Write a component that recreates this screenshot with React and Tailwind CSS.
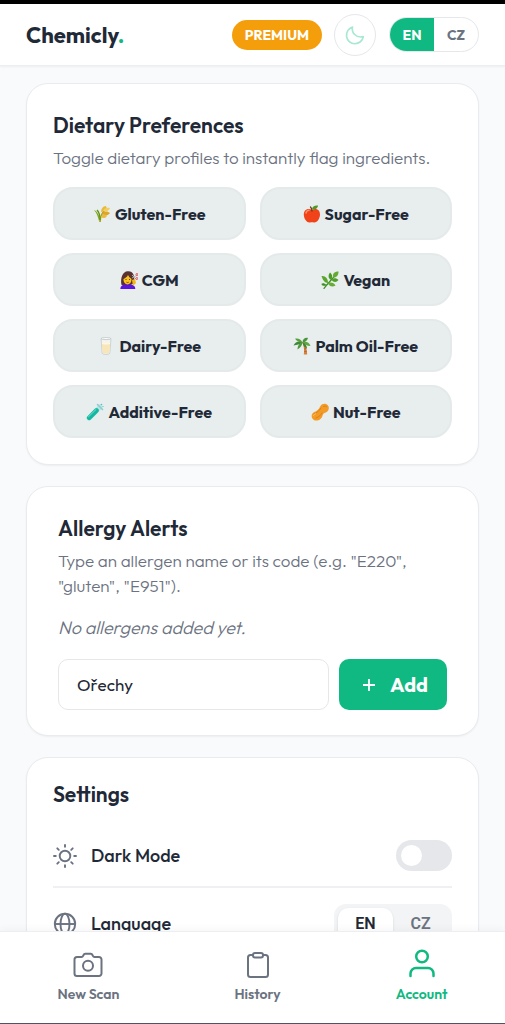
import React, { useState } from 'react';

const WheatIcon = () => (
    <svg viewBox="0 0 18 18" className="h-[18px] w-[18px]" fill="none" aria-hidden="true">
        <path d="M7 17C7 12 8 8 14 3" stroke="#a3a01e" strokeWidth="1.6" />
        <path d="M6 16C5 12 4 8 1 5c3 1 5 5 6 9" fill="#7fa61c" />
        <path d="M4 5c2 2 3 6 3 10" stroke="#5f9414" strokeWidth="1.3" />
        <path d="M8 7c0-3 2-6 5-6 1 3-2 6-5 6z" fill="#e9b93a" />
        <path d="M10 6c1-3 4-4 7-3-1 3-4 4-7 3z" fill="#f5ce5a" />
        <path d="M9 9c2-3 5-3 8-1-2 3-5 3-8 1z" fill="#dfa52a" />
        <path d="M8 12c1-3 4-3 6-1-1 2-4 3-6 1z" fill="#eabb40" />
    </svg>
);

const AppleIcon = () => (
    <svg viewBox="0 0 18 18" className="h-[18px] w-[18px]" fill="none" aria-hidden="true">
        <path d="M9 5C6 3 1 4 .8 9.500.8 14 4 18 7 17.500c1.500-.5 2.500-.5 4 0 3 .5 6-4 6-8C17 4 12 3 9 5z" fill="#f0431a" />
        <path d="M3 8c.4-1.800 1.500-2.700 3-2.800" stroke="#ff9166" strokeWidth="1.500" strokeLinecap="round" />
        <path d="M9 6c0-2-.5-3-1.500-4" stroke="#6b3b1c" strokeWidth="1.300" strokeLinecap="round" />
        <path d="M9 4.500c0-3 3-4.500 6-4C15 3 12 5 9 4.500z" fill="#4d9a24" />
    </svg>
);

const HaircutIcon = () => (
    <svg viewBox="0 0 18 18" className="h-[18px] w-[18px]" fill="none" aria-hidden="true">
        <path d="M1.500 14C0 7 3 0 8 .3c5-.3 7 4 6 12l-4 2z" fill="#5a3330" />
        <path d="M.3 18c0-3 2-4.500 5-4.500h5c3 0 5 1.500 5 4.500z" fill="#5b14e0" />
        <ellipse cx="7.500" cy="8.500" rx="4" ry="5" fill="#fcc21b" />
        <path d="M3 8c2-.5 4-2 5-4 1 2 2 3 4 4 0-4-1-6-4-6S3 4 3 8z" fill="#5a3330" />
        <path d="M5.500 8.500h1M9 8.500h1M6.500 11.200c.8.500 1.500.500 2.200 0" stroke="#58332c" strokeWidth=".9" />
        <path d="M12 7l5.500-3M12 4l4 4" stroke="#a8b4bb" strokeWidth="1" />
        <circle cx="17" cy="3.500" r="1" stroke="#e8515a" />
        <circle cx="16.800" cy="7.500" r="1" stroke="#e8515a" />
        <path d="M12 9l3-1 1 4-3 3z" fill="#f5b51b" />
    </svg>
);

const HerbIcon = () => (
    <svg viewBox="0 0 18 18" className="h-[18px] w-[18px]" fill="none" aria-hidden="true">
        <path d="M3 17.500C6 13 11 9 15 3" stroke="#3f8f22" strokeWidth="1.300" strokeLinecap="round" />
        <path d="M17.500.5C13 .5 11 3 12.500 6.500 16 6.500 17.500 4 17.500.5z" fill="#65ab32" />
        <path d="M10 9C7 7.500 7 4 9 1.500c2.500 2 3 5 1 7.500z" fill="#4b9b27" />
        <path d="M7 12C3.500 12 1.500 8.500.5 5 4.500 4.500 7 7.500 7 12z" fill="#5aa52c" />
        <path d="M10.500 9c2-2.500 5-2 7 0-2 2.500-5 2.500-7 0z" fill="#4f9f2a" />
        <path d="M7 12.500c2-2 6-1 7.500 2-3 2-6 1-7.500-2z" fill="#67ad35" />
        <path d="M5.500 14C3.500 12 1.500 12 .3 13c1 2 3 2.500 5.200 1z" fill="#3f8f22" />
    </svg>
);

const MilkIcon = () => (
    <svg viewBox="0 0 18 18" className="h-[18px] w-[18px]" fill="none" aria-hidden="true">
        <path d="M4 1.500h10l-1.200 14.800C12 17.800 6 17.800 5.200 16.300z" fill="#f3f4f1" stroke="#c3cbcb" strokeWidth=".8" />
        <path d="M4.800 6.500h8.400l-.9 9.300c-1 1-5.600 1-6.600 0z" fill="#f8e6b8" />
        <ellipse cx="9" cy="6.500" rx="4.200" ry="1.100" fill="#fff6de" />
        <ellipse cx="9" cy="1.600" rx="5" ry="1" fill="#fff" stroke="#b5bebe" strokeWidth=".7" />
    </svg>
);

const PalmIcon = () => (
    <svg viewBox="0 0 18 18" className="h-[18px] w-[18px]" fill="none" aria-hidden="true">
        <path d="M9 5c2 4 2.500 8 1.800 12.500h3.400C14 12 12.500 8 10.500 5z" fill="#d8803a" />
        <path d="M11 9.500l1.800-.5M11.300 12l2.200-.4M11.300 14.500l2.500-.3" stroke="#a85c28" strokeWidth=".8" />
        <path d="M9.500 5.500C6 3.500 2.500 4.500.5 8.500 4 8 7 7.500 9.500 5.500z" fill="#3f8a3a" />
        <path d="M9.500 5.500C8 2.500 5 .8 2 1.800 4 4.500 6.500 5.500 9.500 5.500z" fill="#5a9f3e" />
        <path d="M9.500 5.500C9.500 2.500 12 .3 15 1 14 4 12 5.300 9.500 5.500z" fill="#4a943b" />
        <path d="M9.500 5.500c3-1.500 6.500-.5 8 3.500-3.500-.3-6-1-8-3.500z" fill="#5fa540" />
        <path d="M9.500 5.500C6 6 4.500 9 4.500 12.500 7.500 10.500 9 8.500 9.500 5.500z" fill="#4f983b" />
        <path d="M9.500 5.500c3 1 4.500 3.500 4.500 6-2.500-1.200-4-3-4.500-6z" fill="#3d8638" />
    </svg>
);

const TubeIcon = () => (
    <svg viewBox="0 0 18 18" className="h-[18px] w-[18px]" fill="none" aria-hidden="true">
        <path d="M3 15L14 4" stroke="#b9e6e4" strokeWidth="5" strokeLinecap="round" />
        <path d="M3.200 14.800L10.500 7.500" stroke="#14b8a0" strokeWidth="4.600" strokeLinecap="round" />
        <path d="M2.500 13.800L10 6.500" stroke="#6fe0d0" strokeWidth="1" strokeLinecap="round" />
        <path d="M11.500 1.500l5 5" stroke="#8fcbd0" strokeWidth="1.600" strokeLinecap="round" />
        <circle cx="15.500" cy="1.500" r=".8" fill="#49c5ba" />
        <circle cx="17" cy="3.500" r=".6" fill="#49c5ba" />
    </svg>
);

const PeanutIcon = () => (
    <svg viewBox="0 0 18 18" className="h-[18px] w-[18px]" fill="none" aria-hidden="true">
        <path d="M9.300 3.200C11 .5 15 0 17 2.500c1.800 2.500.5 6-2.200 7-2 .7-2.800 1.200-3.300 3.200C10.700 16.500 6 18.800 2.800 17-.3 15 0 10.500 3.300 9c2.500-1 4.500-2.500 6-5.800z" fill="#f39a27" />
        <path d="M3 11c3-1 5-3 7-6M5 15c3-1 5-3 6-5M12.500 3.500c1.300-.7 2.500-.5 3.200.3" stroke="#d47b17" strokeWidth=".8" strokeLinecap="round" />
        <path d="M2.500 12.500c.5-1 1-1.500 2-1.800" stroke="#ffc56b" strokeWidth="1" strokeLinecap="round" />
    </svg>
);

const dietaryProfiles = [
    { id: 'gluten', label: 'Gluten-Free', Icon: WheatIcon },
    { id: 'sugar', label: 'Sugar-Free', Icon: AppleIcon },
    { id: 'cgm', label: 'CGM', Icon: HaircutIcon },
    { id: 'vegan', label: 'Vegan', Icon: HerbIcon },
    { id: 'dairy', label: 'Dairy-Free', Icon: MilkIcon },
    { id: 'palm', label: 'Palm Oil-Free', Icon: PalmIcon },
    { id: 'additive', label: 'Additive-Free', Icon: TubeIcon },
    { id: 'nut', label: 'Nut-Free', Icon: PeanutIcon },
];

const MoonIcon = () => (
    <svg viewBox="0 0 24 24" className="h-5 w-5" fill="none" stroke="#a7e8d0" strokeWidth="2" strokeLinejoin="round" aria-hidden="true">
        <path d="M22 14A10.200 10.200 0 1 1 9 2.500C7.500 9 13 16 22 14z" />
    </svg>
);

const SunIcon = () => (
    <svg viewBox="0 0 24 24" className="h-6 w-6 shrink-0" fill="none" stroke="currentColor" strokeWidth="1.900" strokeLinecap="round" aria-hidden="true">
        <circle cx="12" cy="12" r="5.300" />
        <path d="M12 1v1.800M12 21.200V23M1 12h1.800M21.200 12H23M4.300 4.300l1.500 1.500M18.200 18.200l1.500 1.500M4.300 19.700l1.500-1.500M18.200 5.800l1.500-1.500" />
    </svg>
);

const GlobeIcon = () => (
    <svg viewBox="0 0 24 24" className="h-6 w-6 shrink-0" fill="none" stroke="currentColor" strokeWidth="1.900" aria-hidden="true">
        <circle cx="12" cy="12" r="10.200" />
        <ellipse cx="12" cy="12" rx="4.500" ry="10.200" />
        <path d="M2 12h20" />
    </svg>
);

const CameraIcon = () => (
    <svg viewBox="0 0 30 30" className="h-[30px] w-[30px]" fill="none" stroke="currentColor" strokeWidth="2" strokeLinejoin="round" aria-hidden="true">
        <path d="M4 8h4.500c1 0 1.300-.5 1.800-1.500.5-1.200 1-1.700 2-1.700h5.400c1 0 1.500.5 2 1.700.5 1 .8 1.500 1.800 1.500H26a2.500 2.500 0 0 1 2.500 2.500V24.500A2.500 2.500 0 0 1 26 27H4a2.500 2.500 0 0 1-2.500-2.500V10.500A2.500 2.500 0 0 1 4 8z" />
        <circle cx="15" cy="16.800" r="5" />
    </svg>
);

const ClipboardIcon = () => (
    <svg viewBox="0 0 30 30" className="h-[30px] w-[30px]" fill="none" stroke="currentColor" strokeWidth="2" strokeLinejoin="round" aria-hidden="true">
        <path d="M10 6H7.500A2.500 2.500 0 0 0 5 8.500v17A2.500 2.500 0 0 0 7.500 28h15a2.500 2.500 0 0 0 2.500-2.500v-17A2.500 2.500 0 0 0 22.500 6H20" />
        <rect x="10" y="4" width="10" height="4.500" rx="2" />
    </svg>
);

const UserIcon = () => (
    <svg viewBox="0 0 30 30" className="h-[30px] w-[30px]" fill="none" stroke="currentColor" strokeWidth="2.500" strokeLinecap="round" aria-hidden="true">
        <circle cx="15" cy="7.500" r="5.800" />
        <path d="M3.500 27v-2.500a5.500 5.500 0 0 1 5.500-5.500h12a5.500 5.500 0 0 1 5.500 5.500V27" />
    </svg>
);

const Card = ({ className, children }) => (
    <section className={`shrink-0 rounded-[22px] border border-[#e9ebee] bg-white shadow-xs ${className}`}>
        {children}
    </section>
);

const navItems = [
    { id: 'scan', label: 'New Scan', Icon: CameraIcon },
    { id: 'history', label: 'History', Icon: ClipboardIcon },
    { id: 'account', label: 'Account', Icon: UserIcon },
];

const Header = ({ lang, setLang }) => (
    <header className="flex h-[66px] shrink-0 items-center justify-between border-t-4 border-b border-t-black border-b-[#eceef1] bg-white px-[26px] shadow-xs">
        <a href="#" className="text-[22px] leading-8 font-bold text-[#1f2937]">
            Chemicly<span className="text-[#10b981]">.</span>
        </a>
        <div className="flex items-center">
            <span className="rounded-full bg-[#f59e0b] px-[13px] text-sm leading-[30px] font-bold text-white">PREMIUM</span>
            <button type="button" aria-label="Toggle dark mode" className="ml-3 flex h-[42px] w-[42px] items-center justify-center rounded-full border border-[#e5e7eb]">
                <MoonIcon />
            </button>
            <div className="ml-[13px] flex h-[35px] w-[90px] overflow-hidden rounded-full border border-[#e5e7eb] text-sm font-bold">
                {['EN', 'CZ'].map(code => (
                    <button
                        key={code}
                        type="button"
                        onClick={() => setLang(code)}
                        className={`flex-1 ${lang === code ? 'bg-[#10b981] text-white' : 'text-[#6b7280]'}`}
                    >
                        {code}
                    </button>
                ))}
            </div>
        </div>
    </header>
);

export default function App() {
    const [lang, setLang] = useState('EN');
    const [allergen, setAllergen] = useState('Ořechy');
    const [darkMode, setDarkMode] = useState(false);
    const [activeTab, setActiveTab] = useState('account');

    return (
        <div className="flex h-screen flex-col bg-[#f9fafb] font-['Outfit','Lato',sans-serif] text-[#1f2937]">
            <Header lang={lang} setLang={setLang} />

            <main className="flex min-h-0 flex-1 flex-col gap-[21px] overflow-y-auto px-[26px] pt-[17px] [scrollbar-width:none]">
                <Card className="px-[26px] pt-[25px] pb-[26px]">
                    <h2 className="text-[21px] leading-8 font-semibold">Dietary Preferences</h2>
                    <p className="mt-1 text-[17px] leading-[25px] font-light text-[#6b7280]">Toggle dietary profiles to instantly flag ingredients.</p>
                    <div className="mt-[17px] grid grid-cols-2 gap-x-[14px] gap-y-[13px]">
                        {dietaryProfiles.map(({ id, label, Icon }) => (
                            <button
                                key={id}
                                type="button"
                                className="flex h-[53px] items-center justify-center gap-1 rounded-[20px] border-2 border-[#e4e9e9] bg-[#e8eeed] text-base font-bold"
                            >
                                <Icon />
                                {label}
                            </button>
                        ))}
                    </div>
                </Card>

                <Card className="px-[31px] py-[25px]">
                    <h2 className="text-[21px] leading-8 font-semibold">Allergy Alerts</h2>
                    <p className="mt-1 text-[17px] leading-[25px] font-light text-[#6b7280]">
                        Type an allergen name or its code (e.g. "E220", "gluten", "E951").
                    </p>
                    <p className="mt-[17px] text-lg leading-[26px] font-light text-[#6b7280] italic">No allergens added yet.</p>
                    <form className="mt-[18px] flex gap-[10px]" onSubmit={e => e.preventDefault()}>
                        <input
                            type="text"
                            aria-label="Allergen"
                            value={allergen}
                            onChange={e => setAllergen(e.target.value)}
                            className="h-[51px] min-w-0 flex-1 rounded-[10px] border border-[#e5e7eb] px-[18px] text-[17px] outline-none"
                        />
                        <button type="submit" className="flex h-[51px] w-[108px] items-center justify-center gap-[14px] rounded-[10px] bg-[#10b981] pl-1 text-xl font-bold text-white">
                            <svg viewBox="0 0 14 14" className="h-[14px] w-[14px]" stroke="currentColor" strokeWidth="1.800" aria-hidden="true">
                                <path d="M7 1v12M1 7h12" />
                            </svg>
                            Add
                        </button>
                    </form>
                </Card>

                <Card className="px-[26px] pt-5 pb-[26px]">
                    <h2 className="text-[21px] leading-8 font-semibold">Settings</h2>
                    <div className="mt-[15px] flex h-[63px] items-center justify-between border-b-2 border-[#eff0f3]">
                        <label htmlFor="dark-mode" className="flex items-center gap-[14px] text-lg font-medium">
                            <span className="text-[#6b7280]"><SunIcon /></span>
                            Dark Mode
                        </label>
                        <input
                            id="dark-mode"
                            type="checkbox"
                            role="switch"
                            checked={darkMode}
                            onChange={e => setDarkMode(e.target.checked)}
                            className="flex h-[31px] w-14 appearance-none items-center rounded-full bg-[#e5e7eb] px-[5px] before:h-[21px] before:w-[21px] before:rounded-full before:bg-white checked:justify-end checked:bg-[#10b981]"
                        />
                    </div>
                    <div className="flex h-[71px] items-center justify-between">
                        <span className="flex items-center gap-[14px] text-lg font-medium">
                            <span className="text-[#6b7280]"><GlobeIcon /></span>
                            Language
                        </span>
                        <div className="flex h-10 w-[118px] rounded-xl bg-[#f3f4f6] p-1 font-['Roboto',sans-serif] text-base font-semibold">
                            {['EN', 'CZ'].map(code => (
                                <button
                                    key={code}
                                    type="button"
                                    onClick={() => setLang(code)}
                                    className={`flex-1 rounded-[10px] ${lang === code ? 'bg-white shadow-sm' : 'text-[#6b7280]'}`}
                                >
                                    {code}
                                </button>
                            ))}
                        </div>
                    </div>
                </Card>
            </main>

            <nav className="flex h-[93px] shrink-0 justify-around border-t border-b border-t-[#eceef1] border-b-[#4b5563] bg-white pt-[17px] shadow-[0_-2px_8px_rgba(0,0,0,0.04)]">
                {navItems.map(({ id, label, Icon }) => (
                    <button
                        key={id}
                        type="button"
                        onClick={() => setActiveTab(id)}
                        className={`flex flex-col items-center gap-[5px] self-start text-sm leading-5 font-semibold ${activeTab === id ? 'text-[#10b981]' : 'text-[#6b7280]'}`}
                    >
                        <Icon />
                        {label}
                    </button>
                ))}
            </nav>
        </div>
    );
}
